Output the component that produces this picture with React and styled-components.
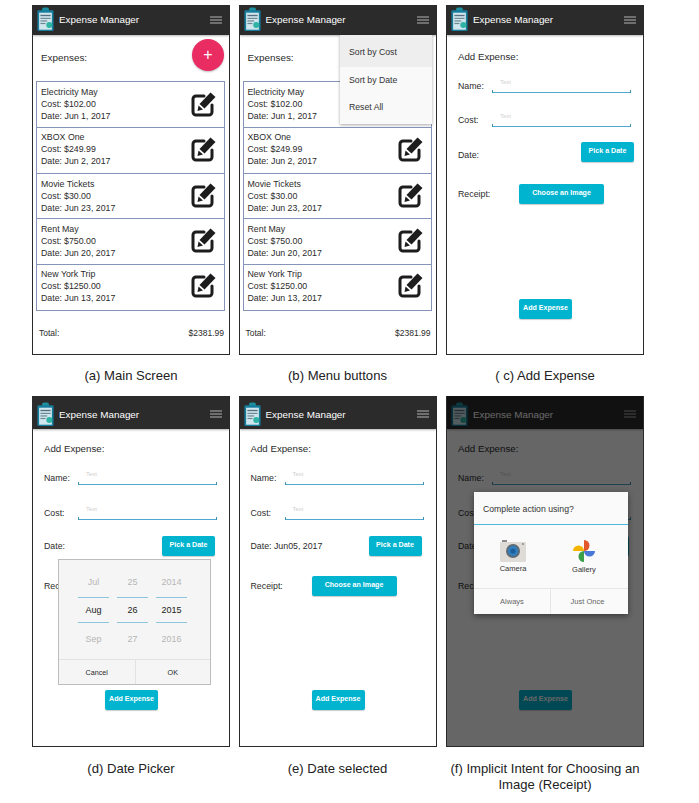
import React from 'react'
import styled, { createGlobalStyle } from 'styled-components'

const expenses = [
  { name: 'Electricity May', cost: '$102.00', date: 'Jun 1, 2017', offset: 0 },
  { name: 'XBOX One', cost: '$249.99', date: 'Jun 2, 2017', offset: -1 },
  { name: 'Movie Tickets', cost: '$30.00', date: 'Jun 23, 2017', offset: 0 },
  { name: 'Rent May', cost: '$750.00', date: 'Jun 20, 2017', offset: -1 },
  { name: 'New York Trip', cost: '$1250.00', date: 'Jun 13, 2017', offset: -2 }
]

const wheels = [
  { month: 'Jul', day: '25', year: '2014' },
  { month: 'Aug', day: '26', year: '2015', active: true },
  { month: 'Sep', day: '27', year: '2016' }
]

const ClipboardLogo = () => (
  <svg width='17' height='25' viewBox='0 0 20 28'>
    <rect x='6' y='0' width='8' height='5' rx='2' fill='#1c8f9e' />
    <rect x='0.5' y='3' width='19' height='24.5' rx='1.5' fill='#167c9c' />
    <rect x='2.5' y='6' width='15' height='20' fill='#cfe6ee' />
    <rect x='4' y='8.5' width='12' height='1.6' fill='#55707c' />
    <rect x='4' y='12' width='12' height='1.4' fill='#6d8791' />
    <rect x='4' y='15' width='8' height='1.4' fill='#6d8791' />
    <rect x='4' y='18' width='6' height='1.4' fill='#6d8791' />
    <circle cx='14.5' cy='20.5' r='3.6' fill='#2fb3a4' />
  </svg>
)

const EditIcon = () => (
  <svg width='25' height='25' viewBox='0 0 25 25'>
    <path
      d='M13 4H5A3 3 0 0 0 2 7V20a3 3 0 0 0 3 3h13a3 3 0 0 0 3-3v-7'
      fill='none'
      stroke='#1d1d1d'
      strokeWidth='3'
      strokeLinecap='round'
    />
    <path d='M19.5 0.5L24.5 5L13.5 16.5L8.5 12Z' fill='#1d1d1d' />
    <path d='M7.5 13.5L12 17.5L6.5 19Z' fill='#1d1d1d' />
  </svg>
)

const CameraIcon = () => (
  <svg width='26' height='22' viewBox='0 0 26 22'>
    <rect x='0' y='2' width='26' height='20' rx='1' fill='#dfdcd8' />
    <rect x='2' y='0' width='5' height='2' fill='#8d8d8d' />
    <circle cx='13' cy='11' r='7' fill='#5f6a72' />
    <circle cx='13' cy='11' r='5' fill='#2f80c2' />
    <circle cx='13' cy='11' r='2.6' fill='#1f5f99' />
    <circle cx='23' cy='4' r='1' fill='#8d8d8d' />
  </svg>
)

const PinwheelIcon = () => (
  <svg width='24' height='24' viewBox='0 0 24 24'>
    <path d='M12 12V1A5.5 5.5 0 0 1 12 12Z' fill='#e2572b' />
    <path d='M12 12H1A5.5 5.5 0 0 1 12 12Z' fill='#f4b400' />
    <path d='M12 12V23A5.5 5.5 0 0 1 12 12Z' fill='#3c9f4a' />
    <path d='M12 12H23A5.5 5.5 0 0 1 12 12Z' fill='#4a78d8' />
  </svg>
)

const AppBar = ({ tall }) => (
  <Bar $tall={tall}>
    <ClipboardLogo />
    <BarTitle>Expense Manager</BarTitle>
    <Burger>
      <i />
      <i />
      <i />
    </Burger>
  </Bar>
)

const ExpenseList = () => (
  <>
    <List>
      {expenses.map(item => (
        <Item key={item.name} $offset={item.offset}>
          <div>
            <div>{item.name}</div>
            <div>Cost: {item.cost}</div>
            <div>Date: {item.date}</div>
          </div>
          <EditIcon />
        </Item>
      ))}
    </List>
    <Total>
      <span>Total:</span>
      <span>$2381.99</span>
    </Total>
  </>
)

const AddForm = ({ date, tall }) => (
  <Form>
    <FormTitle $tall={tall}>Add Expense:</FormTitle>
    <InputRow $height={29}>
      <span>Name:</span>
      <Field>Text</Field>
    </InputRow>
    <InputRow $height={tall ? 35 : 34}>
      <span>Cost:</span>
      <Field>Text</Field>
    </InputRow>
    <DateRow $tall={tall}>
      <span>{date || 'Date:'}</span>
      <Button>Pick a Date</Button>
    </DateRow>
    <ReceiptRow $tall={tall}>
      <span>Receipt:</span>
      <WideButton>Choose an Image</WideButton>
    </ReceiptRow>
    <SubmitButton $tall={tall}>Add Expense</SubmitButton>
  </Form>
)

const App = () => (
  <>
    <GlobalStyle />
    <Page>
      <Figure>
        <Phone>
          <AppBar />
          <ListHead>
            <Heading>Expenses:</Heading>
            <Fab>+</Fab>
          </ListHead>
          <ExpenseList />
        </Phone>
        <Caption>(a) Main Screen</Caption>
      </Figure>

      <Figure>
        <Phone>
          <AppBar />
          <ListHead>
            <Heading>Expenses:</Heading>
          </ListHead>
          <ExpenseList />
          <Menu>
            <MenuItem $active>Sort by Cost</MenuItem>
            <MenuItem>Sort by Date</MenuItem>
            <MenuItem>Reset All</MenuItem>
          </Menu>
        </Phone>
        <Caption>(b) Menu buttons</Caption>
      </Figure>

      <Figure>
        <Phone>
          <AppBar />
          <AddForm />
        </Phone>
        <Caption>( c) Add Expense</Caption>
      </Figure>

      <Figure>
        <Phone $tall>
          <AppBar tall />
          <AddForm tall />
          <Picker>
            <Wheels>
              {wheels.map(row => (
                <WheelRow key={row.month} $active={row.active}>
                  <span>{row.month}</span>
                  <span>{row.day}</span>
                  <span>{row.year}</span>
                </WheelRow>
              ))}
            </Wheels>
            <PickerActions>
              <span>Cancel</span>
              <span>OK</span>
            </PickerActions>
          </Picker>
        </Phone>
        <Caption $tall>(d) Date Picker</Caption>
      </Figure>

      <Figure>
        <Phone $tall>
          <AppBar tall />
          <AddForm tall date='Date: Jun05, 2017' />
        </Phone>
        <Caption $tall>(e) Date selected</Caption>
      </Figure>

      <Figure>
        <Phone $tall>
          <AppBar tall />
          <AddForm tall />
          <Scrim />
          <Dialog>
            <DialogTitle>Complete action using?</DialogTitle>
            <Choices>
              <Choice>
                <CameraIcon />
                <span>Camera</span>
              </Choice>
              <Choice>
                <PinwheelIcon />
                <span>Gallery</span>
              </Choice>
            </Choices>
            <DialogActions>
              <span>Always</span>
              <span>Just Once</span>
            </DialogActions>
          </Dialog>
        </Phone>
        <Caption $tall>(f) Implicit Intent for Choosing an Image (Receipt)</Caption>
      </Figure>
    </Page>
  </>
)

const GlobalStyle = createGlobalStyle`
  html, body {
    margin: 0;
    background: #fff;
  }

  body {
    font-family: 'Liberation Sans', Arial, sans-serif;
    color: #2b2b2b;
  }
`

const Page = styled.div`
  display: grid;
  grid-template-columns: 206.5px 207.5px 198px;
  grid-auto-rows: 391px;
  width: 699px;
  height: 803px;
  box-sizing: border-box;
  padding: 5px 0 0 32px;
`

const Figure = styled.figure`
  margin: 0;
  width: 198px;
  display: flex;
  flex-direction: column;
  align-items: center;
`

const Phone = styled.div`
  position: relative;
  display: flex;
  flex: none;
  flex-direction: column;
  width: 100%;
  height: ${props => (props.$tall ? '351px' : '350px')};
  box-sizing: border-box;
  border: 1px solid #2a2a2a;
  border-top: 0;
  background: #fff;
  overflow: hidden;
`

const Caption = styled.figcaption`
  margin-top: ${props => (props.$tall ? '14px' : '13px')};
  font-size: 13.1px;
  line-height: 16px;
  color: #222;
  text-align: center;
`

const Bar = styled.header`
  display: flex;
  flex: none;
  align-items: center;
  height: ${props => (props.$tall ? '33px' : '29.5px')};
  box-sizing: border-box;
  padding: ${props => (props.$tall ? '3px' : '0')} 7px 0 4px;
  background: #2b2b2b;
  box-shadow: 0 1px 2px rgba(0, 0, 0, 0.3);
  color: #fff;
`

const BarTitle = styled.div`
  flex: 1;
  margin-left: 5px;
  font-size: 9.9px;
`

const Burger = styled.div`
  display: flex;
  flex-direction: column;
  gap: 1.5px;

  i {
    display: block;
    width: 12px;
    height: 1.5px;
    background: #6f6f6f;
  }
`

const ListHead = styled.div`
  display: flex;
  flex: none;
  align-items: center;
  justify-content: space-between;
  height: 45px;
  padding: 0 5px 0 8px;
  box-sizing: border-box;
`

const Heading = styled.div`
  font-size: 9.9px;
`

const Fab = styled.div`
  display: flex;
  align-items: center;
  justify-content: center;
  width: 32px;
  height: 32px;
  margin-bottom: 4px;
  border-radius: 50%;
  background: #e92c62;
  color: #fff;
  font-size: 16px;
  font-weight: 300;
  box-shadow: 0 1px 2px rgba(0, 0, 0, 0.25);
`

const List = styled.div`
  display: flex;
  flex-direction: column;
  margin: 1.5px 4px 0 3px;
  border: 1px solid #8594b8;
  border-bottom: 0;
`

// rows in the picture don't sit quite centred, $offset moves the content up
const Item = styled.div`
  display: flex;
  align-items: center;
  justify-content: space-between;
  height: 45.8px;
  box-sizing: border-box;
  padding: 0 8px ${props => props.$offset * -2}px 4px;
  border-bottom: 1px solid #8594b8;
  font-size: 8.8px;
  line-height: 12px;
`

const Total = styled.div`
  display: flex;
  justify-content: space-between;
  margin-top: 16px;
  padding: 0 5px 0 6px;
  font-size: 8.5px;
  line-height: 12px;
`

const Menu = styled.div`
  position: absolute;
  top: 29.5px;
  right: 4px;
  width: 92px;
  padding-bottom: 2px;
  background: #f9f9f9;
  box-shadow: 0 1px 3px rgba(0, 0, 0, 0.35);
`

const MenuItem = styled.div`
  padding: ${props => (props.$active ? '4.5px' : '0')} 9.5px 0;
  font-size: 8.7px;
  line-height: 27.5px;
  color: #333;
  background: ${props => (props.$active ? '#eeeeee' : 'transparent')};
`

const Form = styled.div`
  display: flex;
  flex: 1;
  flex-direction: column;
  padding: 0 11px;
  font-size: 8.8px;
`

const FormTitle = styled.div`
  margin-top: ${props => (props.$tall ? '13px' : '15.5px')};
  font-size: 9.7px;
  line-height: 14px;
`

const InputRow = styled.div`
  display: flex;
  align-items: flex-end;
  gap: 9px;
  height: ${props => props.$height}px;

  span {
    flex: none;
    width: 25px;
    padding-bottom: 2px;
  }
`

// the underline has a small upward tick at both ends
const Field = styled.div`
  flex: 1;
  height: 20px;
  margin-right: 1px;
  padding: 5px 0 0 8px;
  box-sizing: border-box;
  background:
    linear-gradient(#3f8fb0, #3f8fb0) left bottom / 1px 3px no-repeat,
    linear-gradient(#3f8fb0, #3f8fb0) right bottom / 1px 3px no-repeat,
    linear-gradient(#4fa8cf, #4fa8cf) left bottom / 100% 1.5px no-repeat;
  color: #cfcfcf;
  font-size: 6px;
  line-height: 8px;
`

const DateRow = styled.div`
  display: flex;
  align-items: center;
  justify-content: space-between;
  margin: ${props => (props.$tall ? '16px 3px 0 0' : '15px -2px 0 0')};
  height: 20px;

  & > span:first-child {
    padding-top: ${props => (props.$tall ? '0' : '5px')};
  }
`

const ReceiptRow = styled.div`
  display: flex;
  align-items: center;
  gap: 28px;
  margin-top: ${props => (props.$tall ? '20px' : '22px')};
  height: 20px;

  & > span:first-child {
    flex: none;
    width: 33px;
  }
`

const Button = styled.div`
  display: flex;
  align-items: center;
  justify-content: center;
  width: 53px;
  height: 20px;
  padding-bottom: 2px;
  box-sizing: border-box;
  border-radius: 2px;
  background: #00b4cf;
  box-shadow: 0 1px 1px rgba(0, 0, 0, 0.2);
  color: #fff;
  font-size: 7.1px;
  font-weight: 700;
`

const WideButton = styled(Button)`
  width: 85px;
`

const SubmitButton = styled(Button)`
  flex: none;
  margin: auto 0 ${props => (props.$tall ? '36px' : '35px')} 61px;
`

const Picker = styled.div`
  position: absolute;
  top: 163px;
  left: 25px;
  width: 153px;
  height: 126px;
  box-sizing: border-box;
  display: flex;
  flex-direction: column;
  justify-content: space-between;
  border: 1px solid #bdbdbd;
  background: #f5f5f5;
`

const Wheels = styled.div`
  display: flex;
  flex-direction: column;
  padding: 8px 4px 0 0;
`

const WheelRow = styled.div`
  display: grid;
  grid-template-columns: repeat(3, 31px);
  column-gap: 8px;
  justify-content: center;
  height: 28.5px;
  font-size: 9px;
  text-align: center;
  color: ${props => (props.$active ? '#222' : '#b5b5b5')};

  span {
    box-sizing: border-box;
    height: ${props => (props.$active ? '26px' : '28.5px')};
    line-height: ${props => (props.$active ? '24px' : '28.5px')};
    margin-top: ${props => (props.$active ? '0.5px' : '0')};
    border-top: ${props => (props.$active ? '1px solid #8cc6dd' : '0')};
    border-bottom: ${props => (props.$active ? '1px solid #8cc6dd' : '0')};
  }
`

const PickerActions = styled.div`
  display: grid;
  grid-template-columns: 1fr 1fr;
  height: 24px;
  border-top: 1px solid #e2e2e2;
  font-size: 7.2px;
  text-align: center;

  span {
    padding-top: 2px;
    line-height: 21px;
  }

  span + span {
    border-left: 1px solid #e2e2e2;
  }
`

const Scrim = styled.div`
  position: absolute;
  inset: 0;
  background: rgba(0, 0, 0, 0.6);
`

const Dialog = styled.div`
  position: absolute;
  top: 96px;
  left: 27px;
  width: 154px;
  height: 122px;
  display: flex;
  flex-direction: column;
  background: #fafafa;
  box-shadow: 0 2px 6px rgba(0, 0, 0, 0.45);
`

const DialogTitle = styled.div`
  flex: none;
  height: 32px;
  padding-left: 9px;
  border-bottom: 1px solid #4fb9dc;
  font-size: 8.7px;
  line-height: 35px;
  color: #333;
`

const Choices = styled.div`
  display: grid;
  flex: 1;
  grid-template-columns: 78px 1fr;
  align-items: center;
  justify-items: center;
  padding-right: 12px;
`

const Choice = styled.div`
  display: flex;
  flex-direction: column;
  align-items: center;
  gap: 2px;
  font-size: 7.5px;
  color: #333;
`

const DialogActions = styled.div`
  display: grid;
  flex: none;
  grid-template-columns: 76px 1fr;
  height: 25px;
  padding-right: 4px;
  border-top: 1px solid #e6e6e6;
  font-size: 7.5px;
  text-align: center;
  color: #666;

  span {
    padding-top: 1px;
    line-height: 24px;
  }

  span + span {
    border-left: 1px solid #e6e6e6;
  }
`

export default App
